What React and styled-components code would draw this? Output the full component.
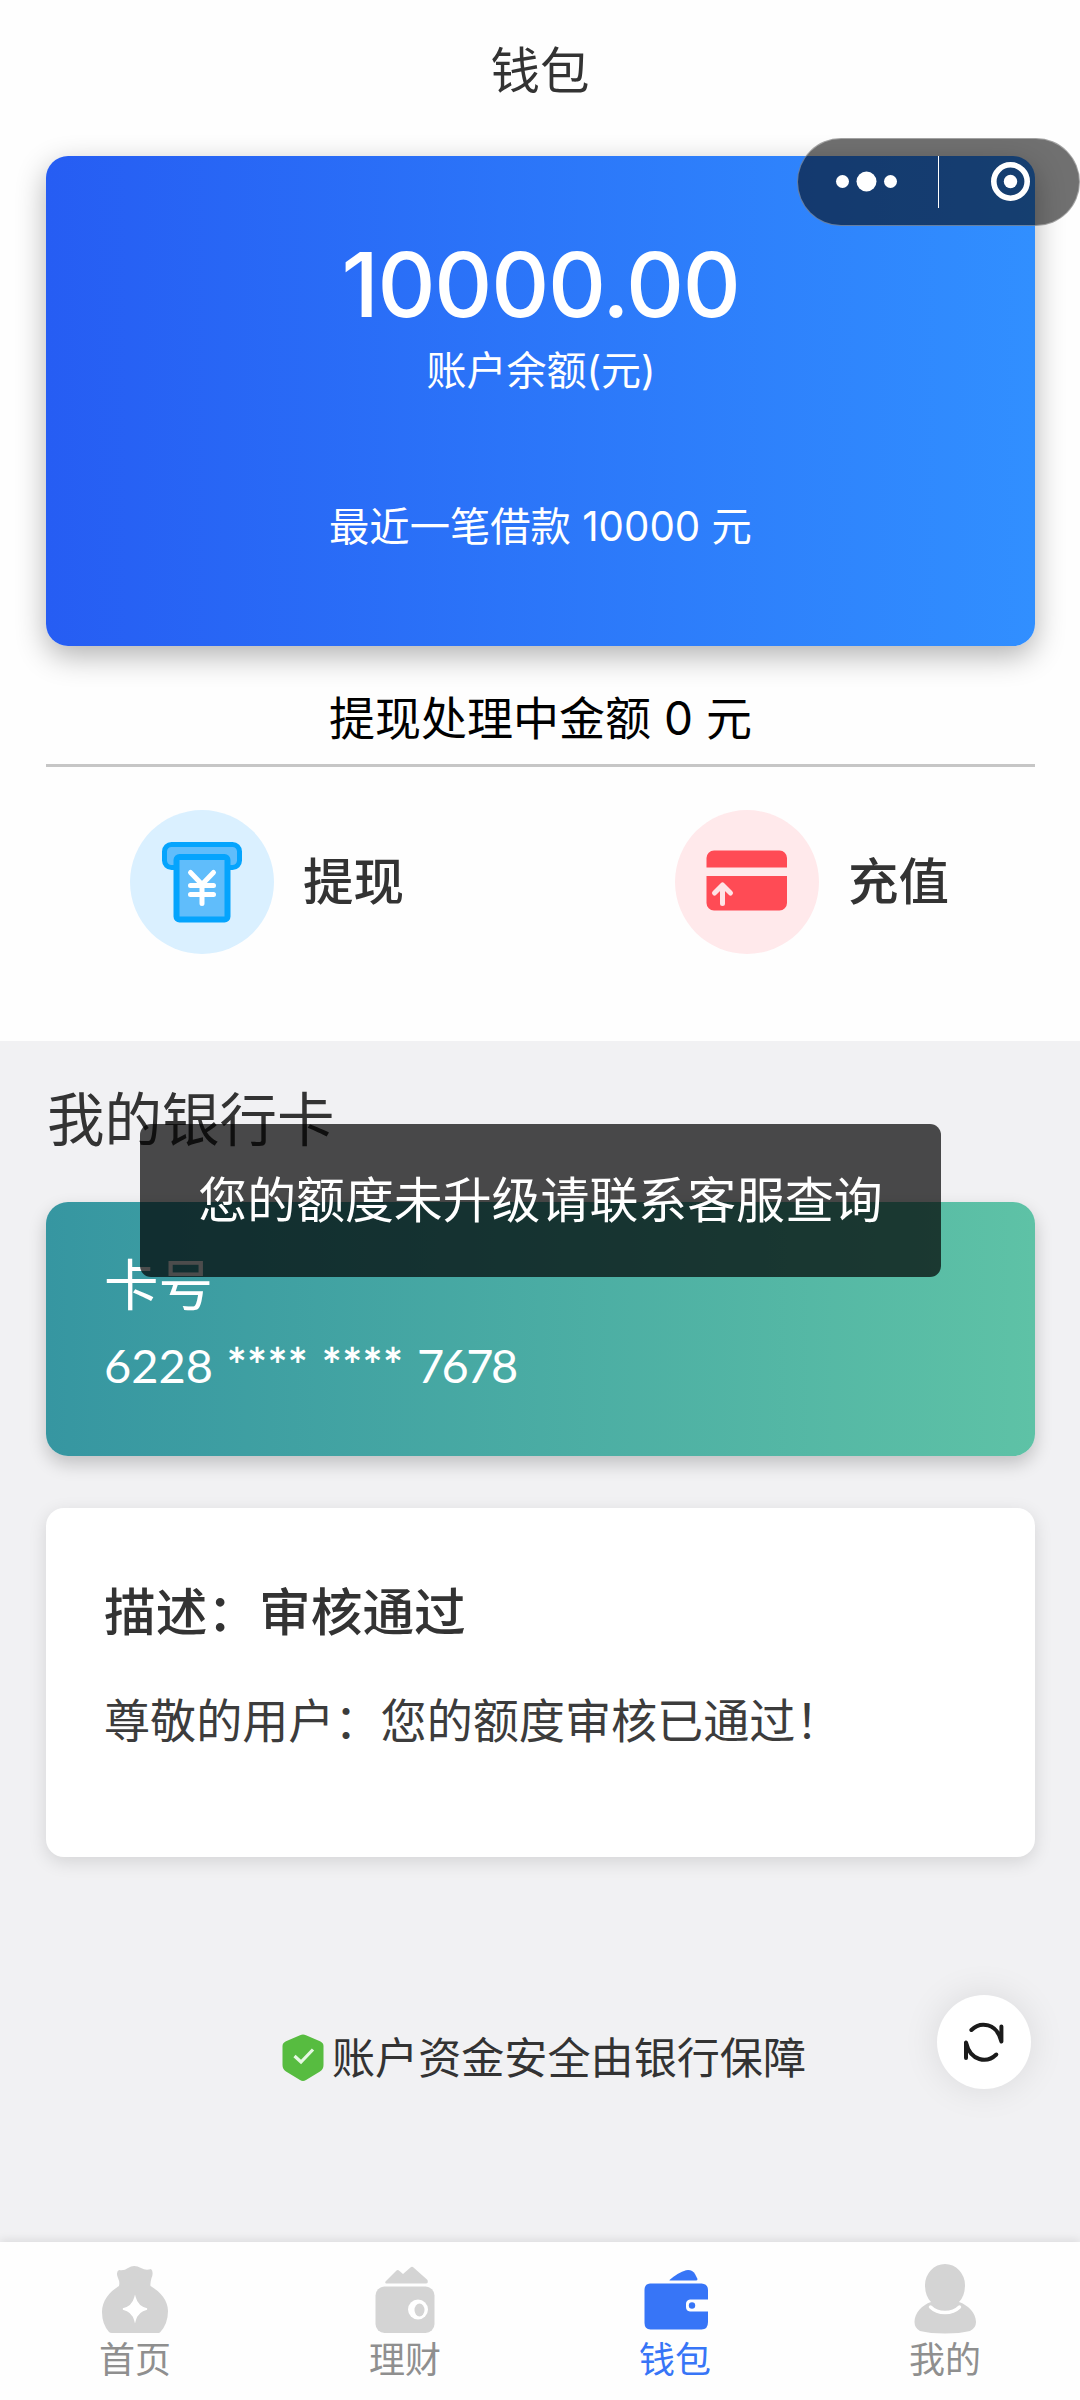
import React from "react";
import styled, { createGlobalStyle } from "styled-components";

const tabs = [
  { label: "首页", icon: <BagIcon /> },
  { label: "理财", icon: <PurseIcon /> },
  { label: "钱包", icon: <WalletIcon />, active: true },
  { label: "我的", icon: <UserIcon /> },
];

function App() {
  return (
    <>
      <GlobalStyle />
      <Page>
        <TopSection>
          <PageTitle>钱包</PageTitle>
          <BalanceCard>
            <Balance>10000.00</Balance>
            <BalanceLabel>账户余额(元)</BalanceLabel>
            <LastLoan>最近一笔借款 10000 元</LastLoan>
          </BalanceCard>
          <Pending>提现处理中金额 0 元</Pending>
          <Actions>
            <Action>
              <ActionIcon $color="#daf0ff">
                <WithdrawIcon />
              </ActionIcon>
              提现
            </Action>
            <Action>
              <ActionIcon $color="#ffe9eb">
                <RechargeIcon />
              </ActionIcon>
              充值
            </Action>
          </Actions>
        </TopSection>
        <BottomSection>
          <SectionTitle>我的银行卡</SectionTitle>
          <BankCard>
            <CardLabel>卡号</CardLabel>
            <CardNumber>
              6228 <Mask>****</Mask> <Mask>****</Mask> <Tail>7678</Tail>
            </CardNumber>
          </BankCard>
          <NoticeCard>
            <h3>描述：审核通过</h3>
            <p>尊敬的用户：您的额度审核已通过！</p>
          </NoticeCard>
          <Guarantee>
            <ShieldIcon />
            账户资金安全由银行保障
          </Guarantee>
        </BottomSection>
        <TabBar>
          {tabs.map((tab) => (
            <Tab key={tab.label} $active={tab.active}>
              {tab.icon}
              {tab.label}
            </Tab>
          ))}
        </TabBar>
        <Capsule>
          <svg width="282" height="88" viewBox="0 0 282 88" fill="#fff">
            <circle cx="44.5" cy="42.5" r="6.5" />
            <circle cx="68.5" cy="42.5" r="10" />
            <circle cx="92.5" cy="42.5" r="6.5" />
            <rect x="140" y="17" width="1" height="52" />
            <circle
              cx="212.5"
              cy="42.5"
              r="16.7"
              fill="none"
              stroke="#fff"
              strokeWidth="5.6"
            />
            <circle cx="212.5" cy="42.5" r="6.7" />
          </svg>
        </Capsule>
        <Toast>您的额度未升级请联系客服查询</Toast>
        <RefreshButton>
          <RefreshIcon />
        </RefreshButton>
      </Page>
    </>
  );
}

function WithdrawIcon() {
  return (
    <svg width="144" height="144" viewBox="0 0 144 144">
      <rect
        x="34.5"
        y="34.5"
        width="75"
        height="23"
        rx="7"
        fill="#60bdfb"
        stroke="#05a4fd"
        strokeWidth="5"
      />
      <rect
        x="46.5"
        y="47"
        width="51"
        height="62.5"
        rx="3"
        fill="#60bdfb"
        stroke="#05a4fd"
        strokeWidth="6"
      />
      <path
        d="M60.5 62.5L72 74.5L83.5 62.5M60.5 75.5H83.5M60.5 84.5H83.5M72 74.5V93.5"
        fill="none"
        stroke="#fff"
        strokeWidth="5"
        strokeLinecap="round"
      />
    </svg>
  );
}

function RechargeIcon() {
  return (
    <svg width="144" height="144" viewBox="0 0 144 144">
      <path
        d="M31.5 57.5V48a7.5 7.5 0 0 1 7.5-7.5H104.5a7.5 7.5 0 0 1 7.5 7.5V57.5Z"
        fill="#ff4b55"
      />
      <path
        d="M31.5 66H112V93a7.5 7.5 0 0 1-7.5 7.5H39a7.5 7.5 0 0 1-7.5-7.5Z"
        fill="#ff4b55"
      />
      <path
        d="M47.5 93.5V75M39.5 83L47.5 75L55.5 83"
        fill="none"
        stroke="#ffe4e6"
        strokeWidth="5"
        strokeLinecap="round"
        strokeLinejoin="round"
      />
    </svg>
  );
}

function ShieldIcon() {
  return (
    <svg width="42" height="48" viewBox="0 0 42 48">
      <path
        d="M18 1.2Q21 -.2 24 1.2L38 7.2Q41.5 8.8 41.5 12V31Q41.5 35 38 37.5L24 46Q21 48 18 46L4 37.5Q.5 35 .5 31V12Q.5 8.8 4 7.2Z"
        fill="#57bc40"
      />
      <path
        d="M12.5 22L19 28L31 15.5"
        fill="none"
        stroke="#e6f8e2"
        strokeWidth="3.2"
      />
    </svg>
  );
}

function RefreshIcon() {
  return (
    <svg
      width="94"
      height="94"
      viewBox="0 0 94 94"
      fill="none"
      stroke="#1b1b1b"
      strokeWidth="4"
      strokeLinecap="round"
      strokeLinejoin="round"
    >
      <path d="M34.4 35C43.5 26 60 28 64.4 46.5V31.5" />
      <path d="M59.3 59.5C50 68.5 33.5 66.5 29 47.5V63" />
    </svg>
  );
}

function BagIcon() {
  return (
    <svg width="70" height="70" viewBox="0 0 70 70" fill="#d4d4d4">
      <path d="M19 6Q24 7 28 4Q34 0 41 4Q46 7 51 5Q54 8 51.5 14Q50 19 50.5 22C61 28 68 37 68 47Q68 60 60 68.5Q59 69 57 69H12Q10 69 9 68Q2 60 2 48C2 37 9 28 19 22Q20 18 18 14Q15.5 8 19 6Z" />
      <path
        d="M35 33.5Q37.5 43 47 45Q37.5 47 35 56.5Q32.5 47 23 45Q32.5 43 35 33.5Z"
        fill="#fff"
        stroke="#fff"
        strokeWidth="1.5"
      />
    </svg>
  );
}

function PurseIcon() {
  return (
    <svg width="70" height="70" viewBox="0 0 70 70" fill="#d4d4d4">
      <path d="M15.5 17.5L26.5 6.5Q28 5.5 29.5 7L33 10L40.5 3.5Q42 2 43.5 3.5L57.5 16Q58.5 19.5 56 19.5H17Q14.5 19.5 15.5 17.5Z" />
      <rect x="5.5" y="22.5" width="59" height="46.5" rx="9" />
      <circle cx="48" cy="45.5" r="10" fill="#fff" />
      <ellipse cx="49.5" cy="46" rx="5" ry="6.5" />
    </svg>
  );
}

function WalletIcon() {
  return (
    <svg width="70" height="70" viewBox="0 0 70 70" fill="#3775f7">
      <path d="M29.5 16Q38 8.5 46 6.2Q52 5 55 10L57.5 15Q57.5 16.5 56 16.5H31Q29 16.5 29.5 16Z" />
      <path d="M10 19.5H61.5Q68 20 68 26V35.5H50Q46 36 46 40V43Q46 47 50 47.5H68V58Q68 65.5 61.5 65.5H10.5Q4.5 65 4.5 59V26Q4.5 20 10 19.5Z" />
      <circle cx="52" cy="41.5" r="3.2" />
    </svg>
  );
}

function UserIcon() {
  return (
    <svg width="70" height="70" viewBox="0 0 70 70" fill="#d4d4d4">
      <path d="M35 0A20 21 0 0 1 55 21Q55 32 49 38C58 41 66 49 66 58Q66 64 60 67Q50 69.5 35 69.5Q20 69.5 10 67Q4.5 64 4.5 58C4.5 49 12 41 21 38Q15 32 15 21A20 21 0 0 1 35 0Z" />
      <path
        d="M20.5 43Q26 48.5 35 48.5T49.5 43"
        fill="none"
        stroke="#fff"
        strokeWidth="3.4"
        strokeLinecap="round"
      />
    </svg>
  );
}

const GlobalStyle = createGlobalStyle`
  * {
    margin: 0;
    padding: 0;
    box-sizing: border-box;
  }
  body {
    font-family: Inter, "Noto Sans CJK SC", sans-serif;
    color: #333;
  }
  svg {
    display: block;
    flex-shrink: 0;
  }
`;

const Page = styled.div`
  position: relative;
  display: flex;
  flex-direction: column;
  width: 1080px;
  height: 2400px;
  overflow: hidden;
  background: #f1f1f3;
`;

const TopSection = styled.section`
  height: 1041px;
  background: #fefefe;
`;

const PageTitle = styled.h1`
  height: 156px;
  line-height: 142px;
  font-size: 49.5px;
  font-weight: 400;
  text-align: center;
`;

const BalanceCard = styled.div`
  height: 490px;
  margin: 0 45px 0 46px;
  padding-top: 89px;
  border-radius: 22px;
  background: linear-gradient(90deg, #265df3, #318fff);
  box-shadow: 0 10px 30px rgba(0, 0, 0, 0.3);
  color: #fff;
  text-align: center;
`;

const Balance = styled.div`
  font-size: 90px;
  font-weight: 450;
  line-height: 80px;
  letter-spacing: -1.3px;
`;

const BalanceLabel = styled.p`
  margin-top: 20px;
  padding-left: 1px;
  font-size: 40px;
  line-height: 52px;
`;

const LastLoan = styled.p`
  margin-top: 105px;
  font-size: 40.3px;
  line-height: 50px;
`;

const Pending = styled.p`
  margin: 38px 45px 0 46px;
  padding-bottom: 12px;
  border-bottom: 3px solid #c6c6c6;
  color: #000;
  font-size: 46px;
  line-height: 68px;
  text-align: center;
`;

const Actions = styled.div`
  display: grid;
  grid-template-columns: 545px 405px;
  margin-top: 43px;
  padding-left: 130px;
`;

const Action = styled.div`
  display: flex;
  align-items: center;
  gap: 29px;
  font-size: 50.5px;
  font-weight: 500;
  line-height: 144px;
`;

const ActionIcon = styled.div`
  width: 144px;
  height: 144px;
  border-radius: 50%;
  background: ${(props) => props.$color};
`;

const BottomSection = styled.section`
  flex: 1;
  padding: 44px 45px 0 46px;
`;

const SectionTitle = styled.h2`
  margin-left: 1px;
  font-size: 57.5px;
  font-weight: 400;
  line-height: 71px;
`;

const BankCard = styled.div`
  height: 254px;
  margin-top: 46px;
  padding: 53px 58px 0;
  border-radius: 22px;
  background: linear-gradient(90deg, #3696a1, #5ec2a6);
  box-shadow: 0 8px 18px rgba(0, 0, 0, 0.2);
  color: #fff;
`;

const CardLabel = styled.p`
  font-size: 54.5px;
  line-height: 61px;
`;

const CardNumber = styled.p`
  margin-top: 19px;
  font-family: Lato, sans-serif;
  font-size: 47px;
  line-height: 60px;
  word-spacing: 1.6px;
`;

const Mask = styled.span`
  font-weight: 700;
  letter-spacing: 0.4px;
`;

const Tail = styled.span`
  letter-spacing: -2.6px;
`;

const NoticeCard = styled.div`
  height: 349px;
  margin-top: 52px;
  padding: 73px 58px 0;
  border-radius: 18px;
  background: #fff;
  box-shadow: 0 5px 18px rgba(0, 0, 0, 0.12);

  h3 {
    font-size: 51.7px;
    font-weight: 500;
    line-height: 62px;
  }
  p {
    margin-top: 48px;
    color: #3c3c3c;
    font-size: 46.1px;
    line-height: 60px;
  }
`;

const Guarantee = styled.div`
  display: flex;
  align-items: center;
  gap: 8px;
  height: 62px;
  margin-top: 170px;
  padding-left: 236px;
  font-size: 43.1px;
  line-height: 60px;
`;

const TabBar = styled.nav`
  display: flex;
  height: 158px;
  background: #fefefe;
  box-shadow: 0 -3px 8px rgba(0, 0, 0, 0.08);
`;

const Tab = styled.div`
  flex: 1;
  display: flex;
  flex-direction: column;
  align-items: center;
  padding-top: 22px;
  color: ${(props) => (props.$active ? "#3775f7" : "#8f8f8f")};
  font-size: 36px;
  line-height: 52px;
`;

const Capsule = styled.div`
  position: absolute;
  top: 138px;
  right: 0;
  width: 283px;
  height: 88px;
  border: 1px solid rgba(255, 255, 255, 0.35);
  border-radius: 44px;
  background: rgba(0, 0, 0, 0.56);
  overflow: hidden;
`;

const Toast = styled.div`
  position: absolute;
  top: 1124px;
  left: 140px;
  width: 801px;
  height: 153px;
  border-radius: 11px;
  background: rgba(0, 0, 0, 0.7);
  color: #fff;
  font-size: 48.9px;
  line-height: 153px;
  text-align: center;
`;

const RefreshButton = styled.div`
  position: absolute;
  top: 1995px;
  left: 937px;
  width: 94px;
  height: 94px;
  border-radius: 50%;
  background: #fff;
  box-shadow: 0 0 36px rgba(0, 0, 0, 0.1);
`;

export default App;
